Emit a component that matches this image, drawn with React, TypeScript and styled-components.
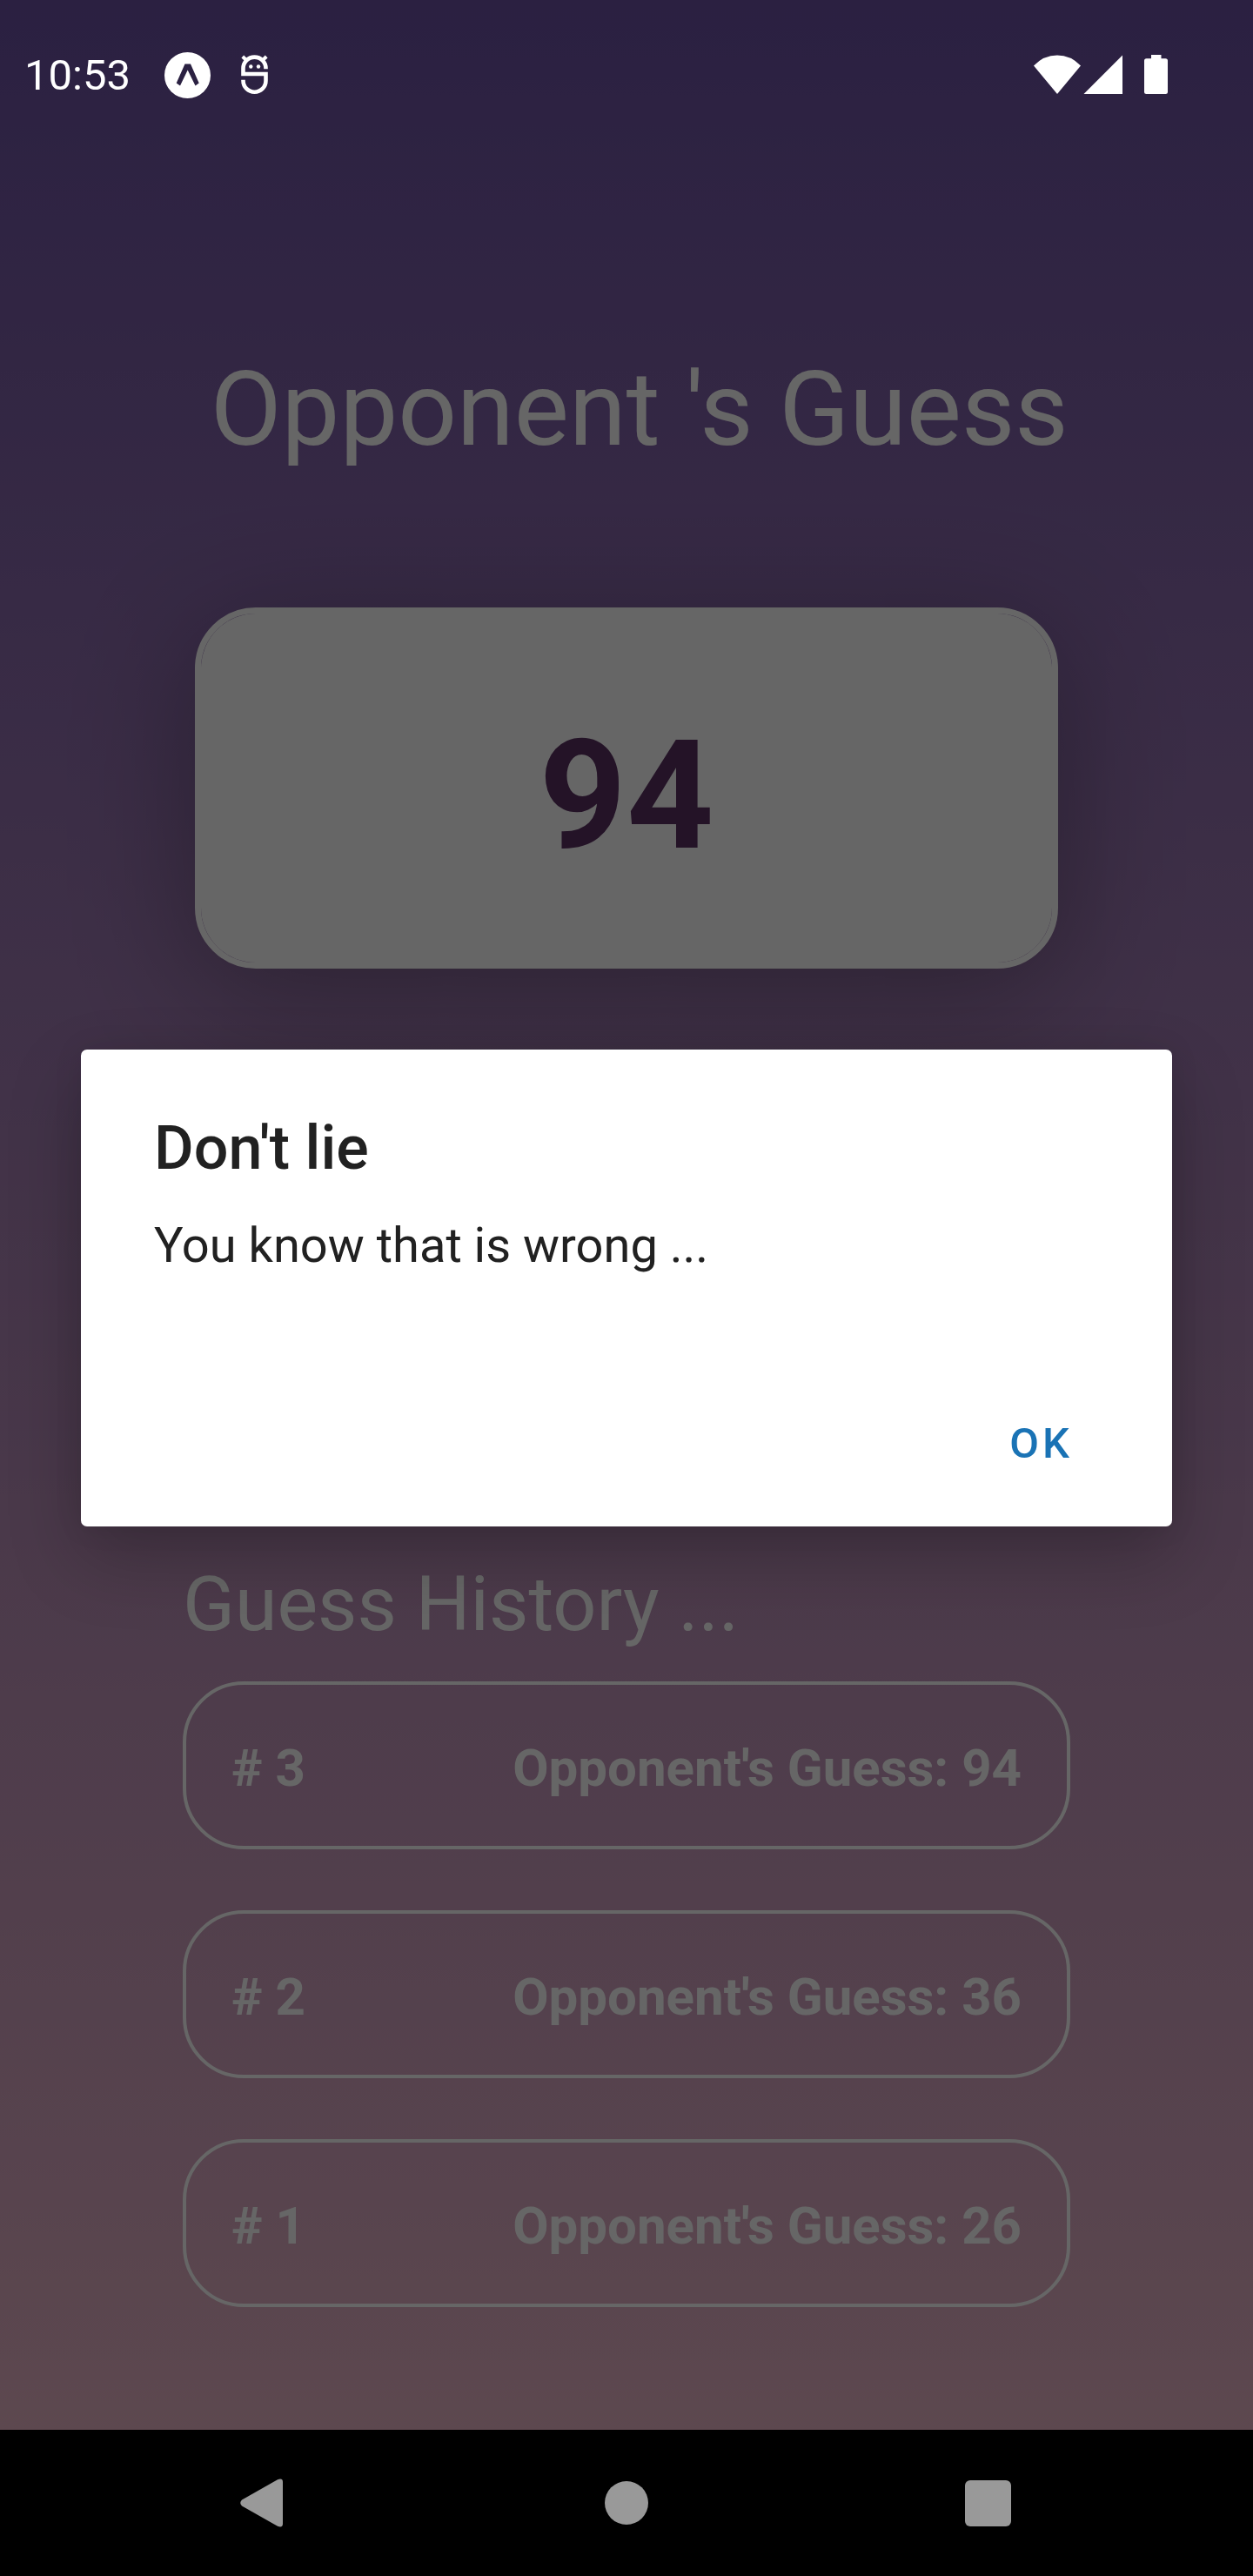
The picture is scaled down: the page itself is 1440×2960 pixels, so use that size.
import React from "react";
import styled, { createGlobalStyle } from "styled-components";

const GlobalStyle = createGlobalStyle`
  *, *::before, *::after { box-sizing: border-box; }
  body { margin: 0; background: #000; }
  h1, h2, p, ul { margin: 0; padding: 0; font-weight: 400; }
  button { font: inherit; border: 0; background: none; padding: 0; cursor: pointer; }
`;

const Screen = styled.div`
  position: relative;
  display: flex;
  flex-direction: column;
  min-height: 100vh;
  font-family: Roboto, "Liberation Sans", sans-serif;
`;

const Game = styled.div`
  flex: 1;
  display: flex;
  flex-direction: column;
  background: linear-gradient(#6b51a4, #e8b4c6);
`;

const StatusBar = styled.header`
  position: relative;
  z-index: 2;
  display: flex;
  align-items: center;
  height: 172px;
  padding: 0 98px 0 28px;
  color: #fff;
  svg { display: block; }
`;

const Clock = styled.time`
  padding-top: 2px;
  font-size: 49px;
  line-height: 58px;
  margin-right: 39px;
`;

const Notifications = styled.div`
  display: flex;
  align-items: center;
  gap: 35px;
`;

const Indicators = styled.div`
  display: flex;
  align-items: center;
  margin-left: auto;
`;

const Main = styled.main`
  flex: 1;
  display: flex;
  flex-direction: column;
  padding: 229px 210px 141px;
  color: #fff;
`;

const Title = styled.h1`
  font-size: 119px;
  line-height: 140px;
  text-align: center;
  white-space: pre;
`;

const GuessCard = styled.div`
  margin: 157px 14px 0;
  padding: 107px 0 89px;
  border: 7px solid #fff;
  border-radius: 70px;
  background: #fff padding-box;
  box-shadow: 0 28px 140px rgba(0, 0, 0, 0.3);
  color: #5a3162;
  font-size: 175px;
  font-weight: 700;
  line-height: 205px;
  text-align: center;
`;

const History = styled.section`
  margin-top: auto;
  padding-top: 70px;
`;

const HistoryTitle = styled.h2`
  font-size: 88px;
  line-height: 104px;
  margin-bottom: 37px;
`;

const HistoryList = styled.ul`
  display: flex;
  flex-direction: column;
  gap: 70px;
  list-style: none;
`;

const HistoryItem = styled.li`
  display: flex;
  justify-content: space-between;
  padding: 61px 52px 54px;
  border: 4px solid #fff;
  border-radius: 70px;
  font-size: 60px;
  font-weight: 700;
  line-height: 70px;
`;

const Scrim = styled.div`
  position: absolute;
  inset: 0;
  z-index: 1;
  display: flex;
  align-items: center;
  justify-content: center;
  padding: 0 93px;
  background: rgba(0, 0, 0, 0.6);
`;

const Dialog = styled.div`
  width: 100%;
  padding: 72px 58px 38px 84px;
  border-radius: 7px;
  background: #fff;
  color: #212121;
  box-shadow: 0 35px 84px rgba(0, 0, 0, 0.22), 0 0 35px rgba(0, 0, 0, 0.08);
`;

const DialogTitle = styled.h2`
  font-size: 70px;
  font-weight: 500;
  line-height: 82px;
`;

const DialogMessage = styled.p`
  margin-top: 38px;
  font-size: 56px;
  line-height: 66px;
`;

const DialogActions = styled.div`
  display: flex;
  justify-content: flex-end;
  margin-top: 138px;
`;

const DialogButton = styled.button`
  && {
    padding: 28px 56px;
    color: #1a73b5;
    font-size: 49px;
    font-weight: 500;
    line-height: 58px;
    letter-spacing: 4px;
  }
`;

const NavBar = styled.nav`
  position: relative;
  z-index: 2;
  display: flex;
  justify-content: center;
  gap: 247px;
  height: 168px;
  background: #000;
`;

const NavButton = styled.button`
  display: flex;
  align-items: center;
  justify-content: center;
  width: 168px;
`;

const ExpoIcon = () => (
  <svg width="53" height="53" viewBox="0 0 53 53" aria-hidden="true">
    <circle cx="26.5" cy="26.5" r="26.5" fill="#fff" />
    <path d="M23.5 13.5H30L39.700 35.500L35.500 38.500L26.700 20.500L18 38.500L13.700 35.500Z" fill="#2b2142" />
  </svg>
);

const DebugIcon = () => (
  <svg width="31" height="46" viewBox="0 0 31 46" fill="none" stroke="#fff" strokeWidth="4.600" aria-hidden="true">
    <path d="M28.500 16.300V15.600A13 13 0 0 0 2.500 15.600V22H28.500V29.700A13 13 0 0 1 2.500 29.700V28.700" />
    <path d="M1.800 2L6.500 6.500M29.200 2L24.500 6.500" strokeWidth="4" />
    <circle cx="11.300" cy="13.500" r="2.200" fill="#fff" stroke="none" />
    <circle cx="20" cy="13.500" r="2.200" fill="#fff" stroke="none" />
  </svg>
);

const WifiIcon = () => (
  <svg width="54" height="46" viewBox="0 0 54 46" fill="#fff" aria-hidden="true">
    <path d="M0 12.500Q11.500 0.500 27 0.500T54 12.500L27 45Z" />
  </svg>
);

const SignalIcon = () => (
  <svg width="48" height="46" viewBox="0 0 48 46" fill="#fff" aria-hidden="true">
    <path d="M48 0.500V45H3.500Z" />
  </svg>
);

const Battery = styled.svg`
  margin-left: 25px;
`;

const BatteryIcon = () => (
  <Battery width="27" height="46" viewBox="0 0 27 46" fill="#fff" aria-hidden="true">
    <path d="M8 -0.500H19.500V4.300H24.500Q27 4.300 27 6.800V42.500Q27 45 24.500 45H2.500Q0 45 0 42.500V6.800Q0 4.300 2.500 4.300H8Z" />
  </Battery>
);

const rounds = [
  { round: 3, guess: 94 },
  { round: 2, guess: 36 },
  { round: 1, guess: 26 },
];

export default function App() {
  const [open, setOpen] = React.useState(true);

  return (
    <Screen>
      <GlobalStyle />
      <Game>
        <StatusBar>
          <Clock>10:53</Clock>
          <Notifications>
            <ExpoIcon />
            <DebugIcon />
          </Notifications>
          <Indicators>
            <WifiIcon />
            <SignalIcon />
            <BatteryIcon />
          </Indicators>
        </StatusBar>
        <Main>
          <Title>{" Opponent 's Guess"}</Title>
          <GuessCard>94</GuessCard>
          <History>
            <HistoryTitle>Guess History ...</HistoryTitle>
            <HistoryList>
              {rounds.map(({ round, guess }) => (
                <HistoryItem key={round}>
                  <span># {round}</span>
                  <span>Opponent's Guess: {guess}</span>
                </HistoryItem>
              ))}
            </HistoryList>
          </History>
        </Main>
      </Game>
      {open && (
        <Scrim>
          <Dialog role="alertdialog" aria-modal="true" aria-labelledby="alert-title" aria-describedby="alert-message">
            <DialogTitle id="alert-title">Don't lie</DialogTitle>
            <DialogMessage id="alert-message">You know that is wrong ...</DialogMessage>
            <DialogActions>
              <DialogButton type="button" onClick={() => setOpen(false)}>OK</DialogButton>
            </DialogActions>
          </Dialog>
        </Scrim>
      )}
      <NavBar aria-label="System">
        <NavButton type="button" aria-label="Back">
          <svg width="58" height="56" viewBox="0 0 58 56" fill="#999" aria-hidden="true">
            <path d="M2 24.500L43 1.200Q49 -1 49 4V52Q49 57 43 54.800L2 31.500Q-1.500 28 2 24.500Z" />
          </svg>
        </NavButton>
        <NavButton type="button" aria-label="Home">
          <svg width="50" height="50" viewBox="0 0 50 50" fill="#999" aria-hidden="true">
            <circle cx="25" cy="25" r="25" />
          </svg>
        </NavButton>
        <NavButton type="button" aria-label="Recent apps">
          <svg width="53" height="53" viewBox="0 0 53 53" fill="#999" aria-hidden="true">
            <rect width="53" height="53" rx="6" />
          </svg>
        </NavButton>
      </NavBar>
    </Screen>
  );
}
